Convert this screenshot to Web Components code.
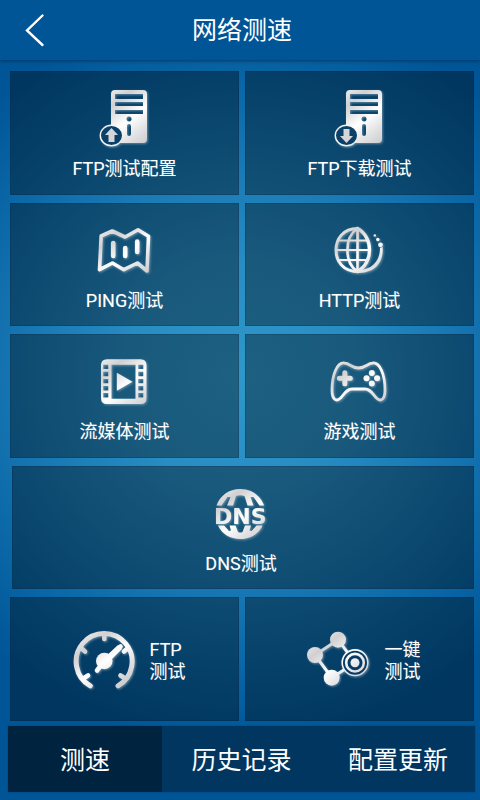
<!DOCTYPE html>
<html lang="zh-CN">
<head>
<meta charset="utf-8">
<meta name="viewport" content="width=device-width, initial-scale=1">
<title>网络测速</title>
<style>
  body {
    margin: 0;
    background: #005596;
    color: white;
    font-family: Roboto, "Noto Sans CJK SC", sans-serif;
  }
</style>
</head>
<body>
<speed-app>
  <app-header slot="header">网络测速</app-header>

  <test-tile icon="upload">FTP测试配置</test-tile>
  <test-tile icon="download">FTP下载测试</test-tile>
  <test-tile icon="map">PING测试</test-tile>
  <test-tile icon="globe">HTTP测试</test-tile>
  <test-tile icon="film">流媒体测试</test-tile>
  <test-tile icon="gamepad">游戏测试</test-tile>
  <test-tile icon="dns" wide>DNS测试</test-tile>
  <test-tile icon="gauge" row>FTP<br>测试</test-tile>
  <test-tile icon="nodes" row>一键<br>测试</test-tile>

  <tab-bar slot="tabs">
    <tab-item active>测速</tab-item>
    <tab-item>历史记录</tab-item>
    <tab-item>配置更新</tab-item>
  </tab-bar>
</speed-app>

<script>
const server = arrow => `
  <path fill-rule="evenodd" d="M20 2H48Q52 2 52 6V51Q52 55 48 55H20Q16 55 16 51V6Q16 2 20 2Z
    M20 6V11H48V6Z M20 14V18H48V14Z M20 22V26H48V22Z
    M34 28.4a2.6 2.6 0 1 0 .1 0Z M32 38V46Q32 48 34 48T36 46V38Q36 36 34 36T32 38Z"/>
  <ellipse cx="16.5" cy="47.5" rx="11.2" ry="10.2" fill="#0b4168" stroke="url(#silver)" stroke-width="1.4"/>
  <path fill="#d6d6d8" d="${arrow}"/>`;

const ICONS = {
  upload: server("M16.5 40L23 47H19.5V54H13.5V47H10Z"),
  download: server("M16.5 55L23 48H19.5V41H13.5V48H10Z"),
  map: `
    <path class="line" stroke-width="3.6" stroke-linejoin="miter" d="M6.2 16L17.2 11L30 17L43 9.7L53.5 16.2L52 51L42.4 43L28.8 49.7L17.4 43L4.5 49.7Z"/>
    <path class="line" stroke-width="4.6" d="M18.2 23V36M30.2 28V36M42.2 21.5V32"/>`,
  globe: `
    <path class="line" stroke-width="3" d="M27.5 8.5C13 8.5 6 19 6 30S13 51.5 27.5 51.5"/>
    <path class="line" stroke-width="2.6" d="M27.5 8.5C14 17 14 43 27.5 51.5M27.5 8V52"/>
    <path class="line" stroke-width="3.4" d="M27.5 8.5C43.5 17 43.5 43 27.5 51.5"/>
    <path class="line" stroke-width="1.8" d="M9 20.5H37M6 30H39M9 40H37"/>
    <path d="M52.6 27C54 41 46 53 29 53C22 53 16 50 13 46C18 50 23 50.5 28 50C41 50 50 42 50 28Z"/>
    <circle cx="50.5" cy="24.8" r="2.4"/><circle cx="47.8" cy="19.5" r="1.7"/><circle cx="44.8" cy="15.4" r="1.2"/>`,
  film: `
    <path fill-rule="evenodd" d="M12 8.3H45.5Q51.5 8.3 51.5 14.3V47Q51.5 53 45.5 53H12Q6 53 6 47V14.3Q6 8.3 12 8.3Z
      M16.5 13.7V47.7H40.5V13.7Z
      ${[13.7, 20.8, 27.9, 35, 42.1].map(y => `M8.3 ${y}v4.4h5v-4.4Z M43.3 ${y}v4.4h5v-4.4Z`).join(" ")}"/>
    <path d="M21.8 21.7L37.5 30.7L21.8 39.7Z"/>`,
  gamepad: `
    <path class="line" stroke-width="2.8" d="M14.5 12C7 11 2 24 2 39C2 49 6.5 51 10.5 47C15 42 17 38 22 38H35C40 38 42 42 46.5 47C50.5 51 55 49 55 39C55 24 50 11 42.5 12C37 12.5 36 17 28.5 17C21 17 20 12.5 14.5 12Z"/>
    <path class="line" stroke-width="5" d="M9.3 27.3H20.3M14.8 21.8V32.8"/>
    <circle cx="41.8" cy="22" r="3"/><circle cx="41.8" cy="32.6" r="3"/><circle cx="36.5" cy="27.3" r="3"/><circle cx="47.1" cy="27.3" r="3"/>`,
  dns: `
    <path d="M5.5 22.6C9 12.5 18 6 29.3 6S49.6 12.5 53.1 22.6H48.5L42.5 14L39.5 14L42.5 22.6H36.5L33.5 13Q29.3 11.5 25 13L22 22.6H16L19.5 14L16.5 14L10.5 22.6Z"/>
    <path d="M7 42.5H13L18 48L20 47.5L18.5 42.5H24.5L27 49Q29.3 50 31.5 49L34 42.5H40L38.5 47.5L40.5 48L45.5 42.5H51.6C47.5 51 39.5 56 29.3 56S11 51 7 42.5Z"/>
    <text x="29.3" y="40.5" text-anchor="middle" font-family="DejaVu Sans" font-weight="bold" font-size="22">DNS</text>`,
  gauge: `
    <path class="line" stroke-width="5" d="M18.3 56.8A28 28 0 1 1 46 56.8"/>
    <path class="line" stroke-width="4.6" d="M32.3 5V10M9 19L13 22.5M56 19L52 22.5M12 49L16 46.5M52.5 49L48.5 46.5"/>
    <path class="line" stroke-width="4.6" d="M25 41.5L32.3 32L48.5 17.5"/>
    <path d="M29 32L46 16L50 20L35 35Z"/>
    <circle cx="32.3" cy="32" r="8.3"/>`,
  nodes: `
    <path class="line" stroke-width="3" d="M48 33.7L31 10.7L8 26L24.7 48.7Z"/>
    <circle cx="31" cy="10.7" r="8"/><circle cx="8" cy="26" r="8"/><circle cx="24.7" cy="48.7" r="8"/>
    <circle cx="48" cy="33.7" r="12.8" fill="#073b66" stroke="url(#silver)" stroke-width="1.6"/>
    <circle cx="48" cy="33.7" r="8.8" fill="#073b66" stroke="url(#silver)" stroke-width="2.6"/>
    <circle cx="48" cy="33.7" r="4.5"/>`
};

// Silver icon, drawn from the table above
class SpeedIcon extends HTMLElement {
  constructor() {
    super();
    this.attachShadow({ mode: "open" });
  }

  connectedCallback() {
    const name = this.getAttribute("name");
    const size = name === "gauge" || name === "nodes" ? 64 : 60;
    this.shadowRoot.innerHTML = `
      <style>
      :host { display: block; flex: none; }
      svg {
        display: block;
        overflow: visible;
        fill: url(#silver);
        filter: drop-shadow(1px 1px 1px rgba(190, 205, 215, 0.5));
      }
      .line {
        fill: none;
        stroke: url(#silver);
        stroke-linecap: round;
        stroke-linejoin: round;
      }
      </style>
      <svg width="${size}" height="${size}" viewBox="0 0 ${size} ${size}" aria-hidden="true">
        <defs>
          <linearGradient id="silver" gradientUnits="userSpaceOnUse" x1="6" y1="4" x2="50" y2="60">
            <stop offset="0" stop-color="#f4f4f4"/>
            <stop offset="0.25" stop-color="#d0d0d2"/>
            <stop offset="0.55" stop-color="#ffffff"/>
            <stop offset="0.75" stop-color="#e4e4e6"/>
            <stop offset="1" stop-color="#c8c8ca"/>
          </linearGradient>
        </defs>
        ${ICONS[name]}
      </svg>
    `;
  }
}
customElements.define("speed-icon", SpeedIcon);

// Header
class AppHeader extends HTMLElement {
  constructor() {
    super();
    this.attachShadow({ mode: "open" });
    this.shadowRoot.innerHTML = `
      <style>
      :host { display: block; }
      header {
        display: grid;
        grid-template-columns: 68px 1fr 64px;
        align-items: center;
        height: 60px;
        background: #005596;
        box-shadow: 0 1px 3px rgba(0, 40, 80, 0.7);
      }
      button {
        height: 60px;
        padding: 0 0 0 24px;
        border: 0;
        background: none;
        color: inherit;
        cursor: pointer;
      }
      svg { display: block; }
      h1 {
        margin: 0;
        padding-top: 2px;
        font-size: 25px;
        line-height: 58px;
        font-weight: 400;
        text-align: center;
      }
      </style>
      <header>
        <button type="button" aria-label="返回">
          <svg width="22" height="34" viewBox="0 0 22 34" fill="none" stroke="currentColor" stroke-width="2.4" stroke-linecap="round">
            <path d="M18.5 2.5L3 17.5L18.5 32"/>
          </svg>
        </button>
        <h1><slot></slot></h1>
      </header>
    `;
  }
}
customElements.define("app-header", AppHeader);

// Tile: an icon with its label below it, or beside it with "row"
class TestTile extends HTMLElement {
  constructor() {
    super();
    this.attachShadow({ mode: "open" });
  }

  connectedCallback() {
    this.shadowRoot.innerHTML = `
      <style>
      :host { display: grid; }
      :host([wide]) { grid-column: 1 / -1; margin-left: 2px; }
      button {
        display: flex;
        flex-direction: column;
        align-items: center;
        justify-content: center;
        gap: 9px;
        padding: 4px 0 0;
        border: 1px solid rgba(0, 30, 60, 0.2);
        background: rgba(0, 0, 0, 0.36);
        color: inherit;
        font-family: inherit;
        font-size: 18px;
        line-height: 24px;
        text-shadow: 0 0 1px rgba(255, 255, 255, 0.3);
        cursor: pointer;
      }
      :host([wide]) button { padding-right: 4px; }
      :host([row]) button {
        flex-direction: row;
        gap: 14px;
        padding-left: 8px;
        line-height: 22px;
        text-align: left;
      }
      </style>
      <button type="button">
        <speed-icon name="${this.getAttribute("icon")}"></speed-icon>
        <span><slot></slot></span>
      </button>
    `;
  }
}
customElements.define("test-tile", TestTile);

// Tabs
class TabItem extends HTMLElement {
  constructor() {
    super();
    this.attachShadow({ mode: "open" });
    this.shadowRoot.innerHTML = `
      <style>
      :host { display: grid; }
      :host([active]) { background: #00233f; }
      button {
        padding: 4px 0 0;
        border: 0;
        background: none;
        color: inherit;
        font-family: inherit;
        font-size: 25px;
        line-height: 62px;
        cursor: pointer;
      }
      </style>
      <button type="button"><slot></slot></button>
    `;
  }
}
customElements.define("tab-item", TabItem);

class TabBar extends HTMLElement {
  constructor() {
    super();
    this.attachShadow({ mode: "open" });
    this.shadowRoot.innerHTML = `
      <style>
      :host { display: block; }
      nav {
        display: grid;
        grid-template-columns: 33fr 34fr 33fr;
        background: #00365f;
        box-shadow: 0 0 1px #00365f;
      }
      </style>
      <nav><slot></slot></nav>
    `;
  }
}
customElements.define("tab-bar", TabBar);

// Page
class SpeedApp extends HTMLElement {
  constructor() {
    super();
    this.attachShadow({ mode: "open" });
    this.shadowRoot.innerHTML = `
      <style>
      :host {
        display: flex;
        flex-direction: column;
        min-height: 100vh;
        background: radial-gradient(circle 370px at 50% 47%, #2f97ca, #288dc3 30%, #1a7ab5 55%, #0965a5 80%, #005596);
      }
      main {
        flex: 1;
        display: grid;
        grid-template-columns: 1fr 1fr;
        grid-auto-rows: 1fr;
        gap: 8px 6px;
        padding: 11px 6px 5px 10px;
      }
      footer { padding: 0 5px 8px 8px; }
      </style>
      <slot name="header"></slot>
      <main><slot></slot></main>
      <footer><slot name="tabs"></slot></footer>
    `;
  }
}
customElements.define("speed-app", SpeedApp);
</script>
</body>
</html>
